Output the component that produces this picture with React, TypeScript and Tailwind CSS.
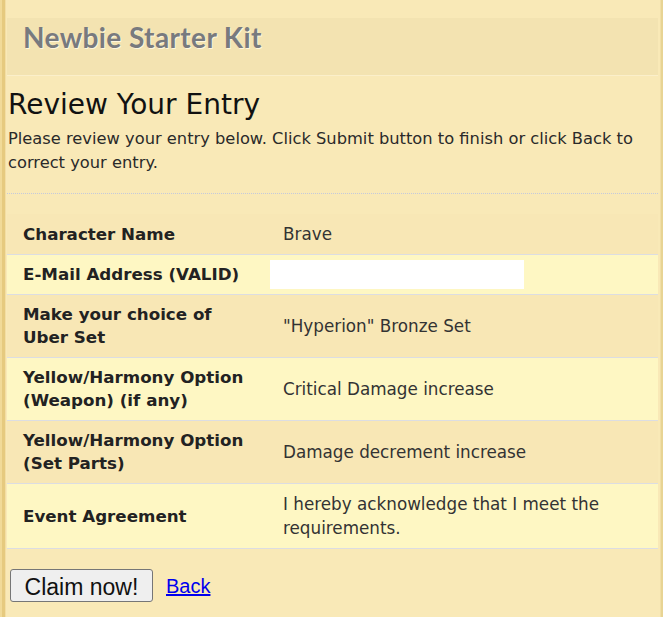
import React from "react";

const rows: { label: React.ReactNode; value: React.ReactNode; light: boolean; email?: boolean }[] = [
  { label: "Character Name", value: "Brave", light: false },
  { label: "E-Mail Address (VALID)", value: null, light: true, email: true },
  { label: <>Make your choice of<br />Uber Set</>, value: "\"Hyperion\" Bronze Set", light: false },
  { label: <>Yellow/Harmony Option<br />(Weapon) (if any)</>, value: "Critical Damage increase", light: true },
  { label: <>Yellow/Harmony Option<br />(Set Parts)</>, value: "Damage decrement increase", light: false },
  { label: "Event Agreement", value: <>I hereby acknowledge that I meet the<br />requirements.</>, light: true },
];

export default function App() {
  return (
    <div className="flex min-h-[617px] bg-[#f9e9b7] text-[#2a2a2a]" style={{ fontFamily: '"DejaVu Sans", sans-serif' }}>
      <div className="flex shrink-0">
        <div className="w-[2px] bg-[#f1da98]" />
        <div className="w-[3px] bg-[#e6ca7f]" />
        <div className="w-[1px] bg-[#f3dea4]" />
      </div>
      <div className="flex-1 pl-[1px] pr-[2px]">
        <div className="mt-[18px] flex h-[58px] items-center border-b border-[#fbefca] bg-[#f3e3b1] pb-[20px] pl-4">
          <span
            className="text-[28px] font-bold leading-[32px] tracking-[0.4px] text-[#787a7e] [text-shadow:1px_1px_0_#fff6dc]"
            style={{ fontFamily: 'Lato, sans-serif' }}
          >
            Newbie Starter Kit
          </span>
        </div>
        <h1 className="mt-[12px] pl-[1px] text-[28px] leading-[34px] text-[#111]">Review Your Entry</h1>
        <p className="mt-[5px] pl-[1px] text-[16.3px] leading-[24px]">
          Please review your entry below. Click Submit button to finish or click Back to correct your entry.
        </p>
        <div className="mt-[18px] border-t border-dotted border-[#c4c9dc]" />
        <div className="mt-[20px]">
          {rows.map((r, i) => (
            <div
              key={i}
              className={`grid grid-cols-[263px_1fr] items-center border-b border-[#dcdde2] ${r.light ? "bg-[#fef7c3]" : "bg-[#f8e7b5]"}`}
            >
              <div className="py-[8px] pl-4 text-[16.7px] font-bold leading-[23px] text-[#222]">{r.label}</div>
              {r.email ? (
                <div className="py-[4px]">
                  <div className="h-[29px] w-[254px] bg-white" />
                </div>
              ) : (
                <div className="py-[8px] pl-[13px] text-[16.8px] leading-[24px] text-[#333]">{r.value}</div>
              )}
            </div>
          ))}
        </div>
        <div className="mt-[20px] flex items-center pl-[3px]">
          <button
            className="h-[33px] w-[143px] rounded-[3px] border border-[#767676] bg-[#efefef] text-[23px] text-[#111]"
            style={{ fontFamily: '"Liberation Sans", Arial, sans-serif' }}
          >
            Claim now!
          </button>
          <a
            href="#"
            className="ml-[13px] text-[20px] text-[#0000ee] underline"
            style={{ fontFamily: '"Liberation Sans", Arial, sans-serif' }}
          >
            Back
          </a>
        </div>
      </div>
      <div className="flex shrink-0">
        <div className="w-[1px] bg-[#f1dfa6]" />
        <div className="w-[2px] bg-[#e8d494]" />
      </div>
    </div>
  );
}
